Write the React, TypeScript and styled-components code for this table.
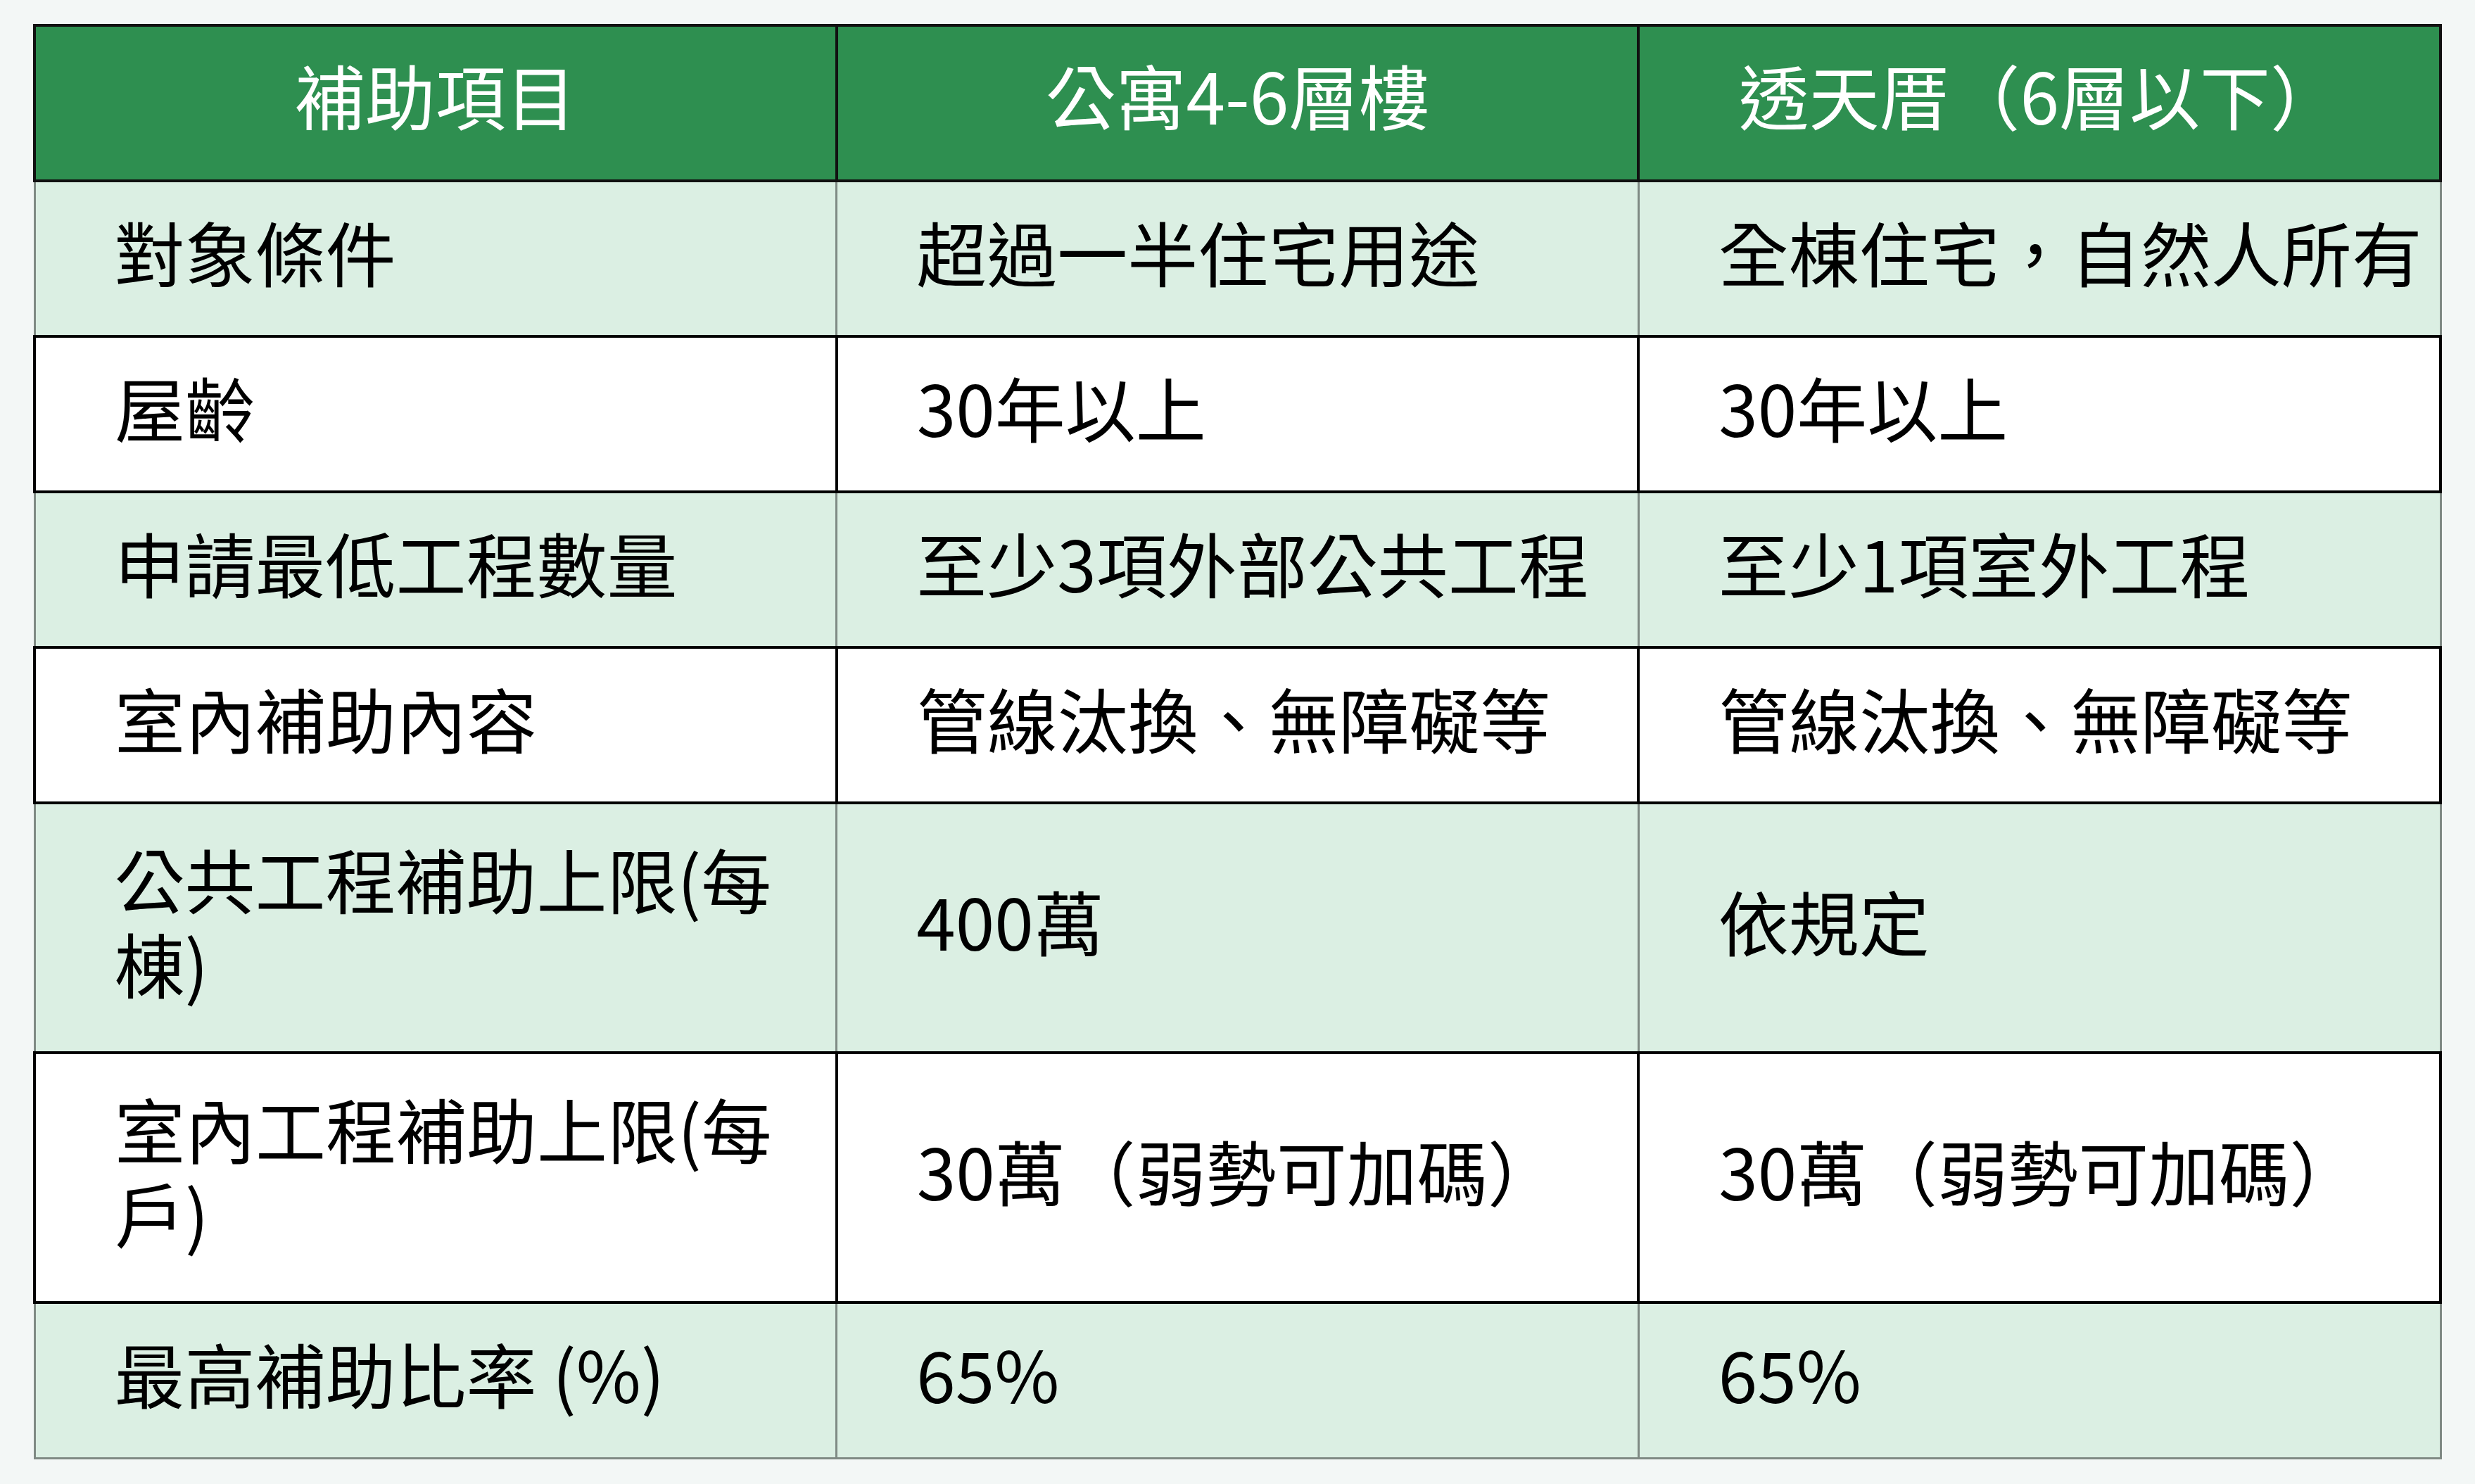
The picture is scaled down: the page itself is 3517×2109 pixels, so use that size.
import React from 'react';
import styled, { createGlobalStyle } from 'styled-components';

const GlobalStyle = createGlobalStyle`
  html, body {
    margin: 0;
    padding: 0;
    background: #f3f7f6;
  }
  body {
    font-family: "Noto Sans CJK TC", "Noto Sans", sans-serif;
  }
`;

const Page = styled.div`
  padding: 34px 47px 36px;
`;

const Table = styled.table`
  width: 100%;
  border-collapse: collapse;
  table-layout: fixed;
  font-size: 100px;
  line-height: 120px;
`;

const HeadRow = styled.tr`
  height: 221px;
`;

const HeadCell = styled.th`
  background: #2e8f50;
  color: #fff;
  font-weight: 400;
  text-align: center;
  border: 4px solid #111;
  padding: 0 8px 26px;
`;

const Row = styled.tr<{ $tall?: boolean }>`
  height: ${p => (p.$tall ? 355 : 221)}px;
`;

const Cell = styled.td<{ $shade: boolean }>`
  background: ${p => (p.$shade ? '#dbefe3' : '#fff')};
  border: ${p => (p.$shade ? '3px solid #7f8a84' : '4px solid #000')};
  color: #000;
  padding: 0 8px 22px 112px;
  vertical-align: middle;
  text-align: left;
  font-weight: 400;
`;

const head = ['補助項目', '公寓4-6層樓', '透天厝（6層以下）'];

const rows = [
    {cells: ['對象條件', '超過一半住宅用途', '全棟住宅，自然人所有']},
    {cells: ['屋齡', '30年以上', '30年以上']},
    {cells: ['申請最低工程數量', '至少3項外部公共工程', '至少1項室外工程']},
    {cells: ['室內補助內容', '管線汰換、無障礙等', '管線汰換、無障礙等']},
    {cells: ['公共工程補助上限(每棟)', '400萬', '依規定'], tall: true},
    {cells: ['室內工程補助上限(每戶)', '30萬（弱勢可加碼）', '30萬（弱勢可加碼）'], tall: true},
    {cells: ['最高補助比率 (%)', '65%', '65%']},
];

const App = () => {
    return (
        <Page>
            <GlobalStyle/>
            <Table>
                <thead>
                <HeadRow>
                    {head.map(h => <HeadCell key={h}>{h}</HeadCell>)}
                </HeadRow>
                </thead>
                <tbody>
                {rows.map((r, i) => (
                    <Row key={i} $tall={r.tall}>
                        {r.cells.map((c, j) => (
                            <Cell key={j} $shade={i % 2 === 0}>{c}</Cell>
                        ))}
                    </Row>
                ))}
                </tbody>
            </Table>
        </Page>
    );
};

export default App;
